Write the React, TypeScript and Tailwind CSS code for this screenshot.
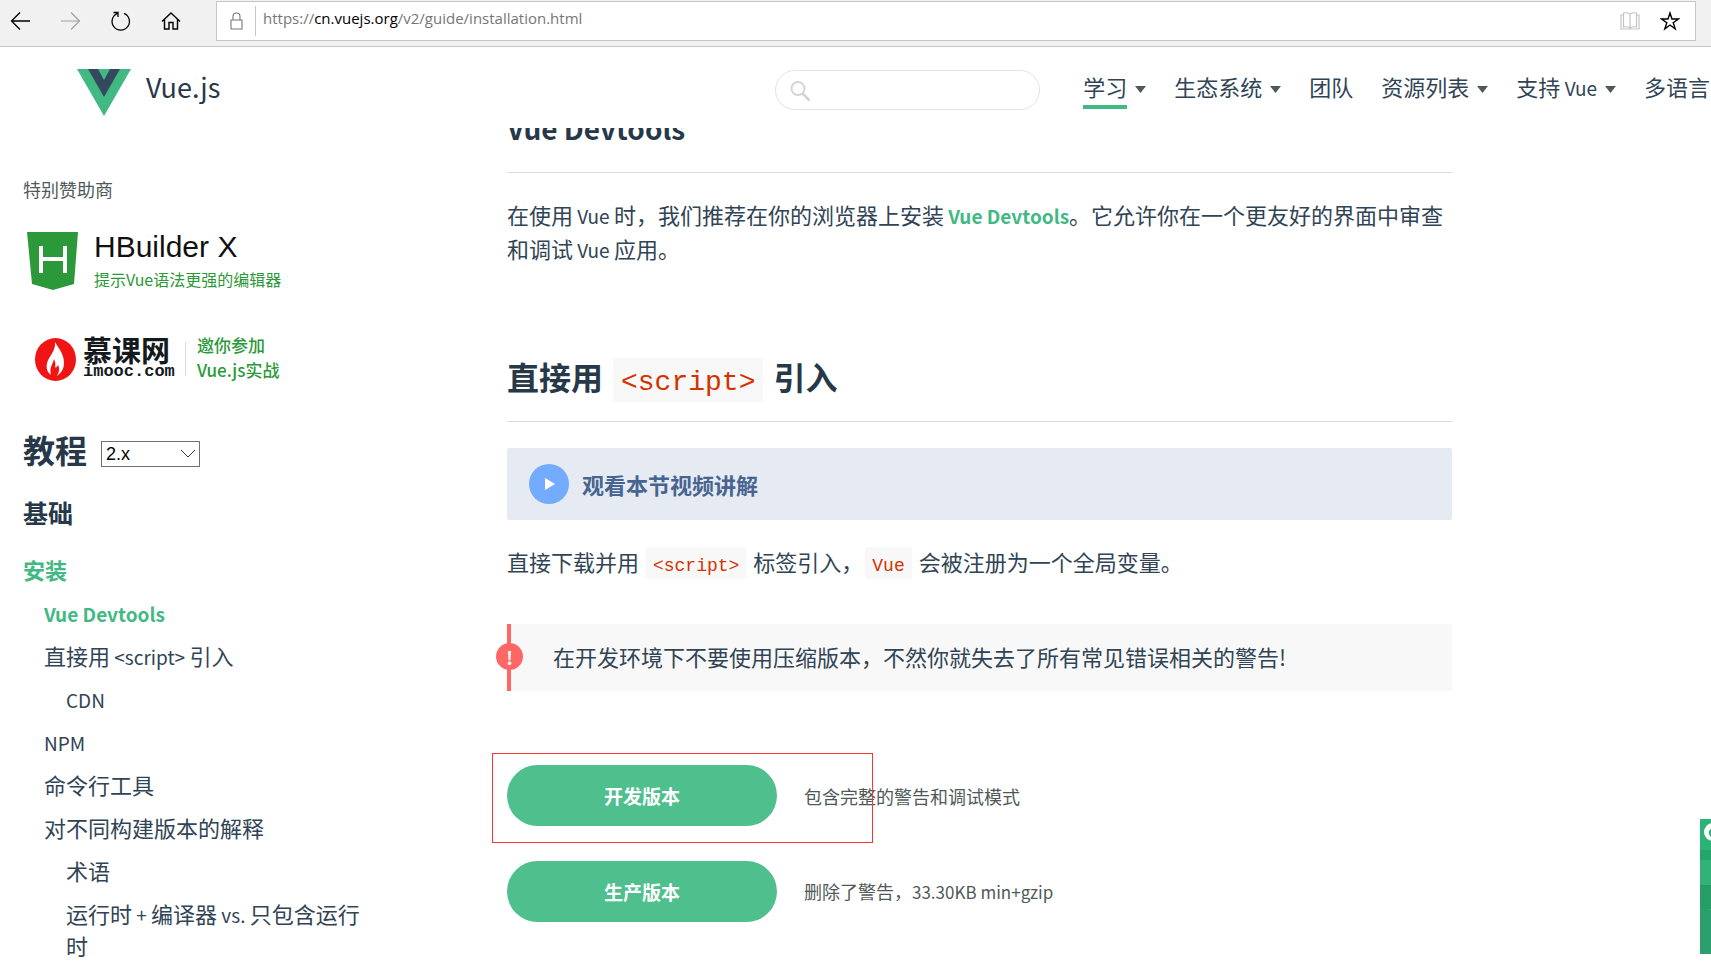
import type { ReactNode } from "react";

const navItems = [
	{ label: "学习", active: true, menu: true },
	{ label: "生态系统", menu: true },
	{ label: "团队" },
	{ label: "资源列表", menu: true },
	{ label: "支持", latin: "Vue", menu: true },
	{ label: "多语言" },
];

function Latin({ children }: { children: ReactNode }) {
	return <span className="text-[19px] leading-none">{children}</span>;
}

function Code({ children }: { children: ReactNode }) {
	return (
		<code className="mx-[2px] rounded-xs bg-[#f8f8f8] px-[7px] pt-[9px] pb-[3px] font-['Liberation_Mono',monospace] text-[18px] leading-none text-[#d63200]">
			{children}
		</code>
	);
}

function BrowserBar() {
	return (
		<div className="flex h-[47px] items-start border-b border-[#c8c8c8] bg-[#f1f1f1] pr-[15px] pl-[10px]">
			<div className="flex h-[42px] w-[206px] items-center gap-[29px]">
				<button aria-label="Back" className="text-black">
					<svg width="21" height="20" viewBox="0 0 21 20" fill="none" stroke="currentColor" strokeWidth="1.3">
						<path d="M20 10H1.5M10 1.5 1.5 10l8.500 8.500" />
					</svg>
				</button>
				<button aria-label="Forward" className="text-[#a0a0a0]">
					<svg width="21" height="20" viewBox="0 0 21 20" fill="none" stroke="currentColor" strokeWidth="1.2">
						<path d="M1 10h18.500M11 1.500 19.500 10 11 18.500" />
					</svg>
				</button>
				<button aria-label="Refresh" className="text-black">
					<svg width="21" height="20" viewBox="0 0 21 20" fill="none" stroke="currentColor" strokeWidth="1.3">
						<path d="M14 2.300A8.700 8.700 0 1 1 7.500 2.300M3.500 1.500H8v4.500" />
					</svg>
				</button>
				<button aria-label="Home" className="text-black">
					<svg width="21" height="20" viewBox="0 0 21 20" fill="none" stroke="currentColor" strokeWidth="1.4">
						<path d="M2 10.500 11 2l9 8.500M4.500 8.500V18H9v-6.500h4V18h4.500V8.500" />
					</svg>
				</button>
			</div>
			<div className="mt-px flex h-10 flex-1 items-center border border-[#c6c6c6] bg-white pl-[13px]">
				<svg width="13" height="18" viewBox="0 0 13 18" fill="none" stroke="#777" strokeWidth="1.1">
					<path d="M1 8h11v9H1zM3 8V4.500a3.500 3.500 0 0 1 7 0V8" />
				</svg>
				<div className="ml-3 h-[30px] w-px bg-[#c6c6c6]" />
				<div className="ml-[7px] pb-[6px] font-['Open_Sans',sans-serif] text-[15px] text-[#767676]">
					https://<span className="text-black">cn.vuejs.org</span>/v2/guide/installation.html
				</div>
				<button aria-label="Reading view" className="ml-auto">
					<svg width="20" height="20" viewBox="0 0 20 20" fill="none" stroke="#c4c4c4" strokeWidth="1.2">
						<path d="M10 3v14M10 3C8 1.500 6 1.500 3.500 2v14c2.500-.5 4.500-.5 6.500 1 2-1.500 4-1.500 6.500-1V2C14 1.500 12 1.500 10 3M3.500 4H1v14h18V4h-2.500" />
					</svg>
				</button>
				<button aria-label="Add to favorites" className="mr-[15px] ml-[20px]">
					<svg width="20" height="20" viewBox="0 0 20 20" fill="none" stroke="#000" strokeWidth="1.400">
						<path d="m10 2 2 6h6.300l-5.100 3.700 2 6.100L10 14l-5.200 3.800 2-6.100L1.700 8H8z" />
					</svg>
				</button>
			</div>
		</div>
	);
}

function Header() {
	return (
		<header className="flex h-[81px] items-center bg-white pl-[77px] text-[#304455]">
			<a href="#" className="flex items-start gap-[15px] pt-[10px]">
				<svg width="54" height="47" viewBox="0 0 54 47">
					<path fill="#42b983" d="M0 0h54L27 47z" />
					<path fill="#35495e" d="M11 0h10l6 11 6-11h10L27 28z" />
				</svg>
				<span className="text-[27px] leading-[36px] text-[#273849]">Vue.js</span>
			</a>
			<div className="relative mt-1 ml-auto">
				<input
					aria-label="Search"
					className="block h-10 w-[265px] rounded-full border border-[#e3e3e3] bg-white pr-4 pl-11 text-base outline-none"
				/>
				<svg className="absolute top-[11px] left-[15px]" width="21" height="21" viewBox="0 0 21 21" fill="none" stroke="#d4d4d4">
					<circle cx="8" cy="7.500" r="6.500" strokeWidth="2" />
					<path d="m12.500 12.500 7 7" strokeWidth="2.500" />
				</svg>
			</div>
			<nav className="mr-px ml-[43px] flex shrink-0 items-center gap-7 text-[22px] leading-[38px]">
				{navItems.map((item) => (
					<a key={item.label} href="#" className="flex items-center gap-2 whitespace-nowrap">
						<span className={item.active ? "border-b-4 border-[#42b983]" : "border-b-4 border-transparent"}>
							{item.label}
							{item.latin && <Latin> {item.latin}</Latin>}
						</span>
						{item.menu && (
							<svg className="mt-1" width="11" height="7" viewBox="0 0 11 7" fill="#4f5959">
								<path d="M0 0h11L5.500 7z" />
							</svg>
						)}
					</a>
				))}
			</nav>
		</header>
	);
}

function Sponsors() {
	return (
		<div>
			<div className="text-[18px] leading-[26px] text-[#4f5959]">特别赞助商</div>
			<a href="#" className="mt-[30px] ml-1 flex gap-4">
				<svg width="51" height="58" viewBox="0 0 51 58">
					<path fill="#2b9939" d="M0 0h51l-4 52-21 6-21-6z" />
					<path fill="none" stroke="#fff" strokeWidth="4" d="M14 14v27M38 14v27M14 27h24" />
				</svg>
				<div>
					<div className="font-['Liberation_Sans',sans-serif] text-[30px] leading-[30px] text-[#111]">HBuilder X</div>
					<div className="mt-[5px] text-[16px] leading-6 text-[#2b9939]">提示Vue语法更强的编辑器</div>
				</div>
			</a>
			<a href="#" className="mt-[41px] ml-3 flex items-center">
				<svg width="41" height="43" viewBox="0 0 41 43">
					<ellipse cx="20.500" cy="21.500" rx="20.500" ry="21.500" fill="#f01414" />
					<path fill="#fff" d="M20 4c4 7 9 12 9 21 0 6-3 10-7 13 2-4 3-7 1-11-1 2-2 3-3 2 1-3 0-5-1-8-1 5-5 8-3 16-4-3-5-7-4-12 2-7 9-12 8-21z" />
				</svg>
				<div className="ml-[7px] w-[92px] text-[#14191e]">
					<div className="text-[29px] leading-[26px] font-bold">慕课网</div>
					<div className="font-['Liberation_Mono',monospace] text-[17px] leading-[20px] font-bold">imooc.com</div>
				</div>
				<div className="ml-[10px] h-[34px] w-px bg-[#ddd]" />
				<div className="ml-[11px] pb-1 text-[17px] leading-[25px] font-medium text-[#2b9939]">
					邀你参加
					<br />
					Vue.js实战
				</div>
			</a>
		</div>
	);
}

function Sidebar() {
	return (
		<aside className="w-[344px] shrink-0 pt-12 text-[#304455]">
			<Sponsors />
			<div className="mt-[39px] flex items-center gap-[14px]">
				<h2 className="text-[32px] leading-[48px] font-bold text-[#273849]">教程</h2>
				<div className="relative mt-[10px]">
					<select
						aria-label="版本"
						className="block h-[26px] w-[99px] appearance-none border border-[#707070] bg-white pl-1 font-['Liberation_Sans',sans-serif] text-[18px] leading-6 text-black"
					>
						<option>2.x</option>
						<option>1.0</option>
					</select>
					<svg className="pointer-events-none absolute top-2 right-1" width="16" height="9" viewBox="0 0 16 9" fill="none" stroke="#333">
						<path d="m1 1 7 7 7-7" />
					</svg>
				</div>
			</div>
			<h3 className="mt-[21px] text-[25px] leading-9 font-bold text-[#273849]">基础</h3>
			<ul className="mt-[23px] space-y-[11px] text-[22px] leading-8">
				<li>
					<a href="#" className="font-bold text-[#42b983]">安装</a>
				</li>
				<li className="pl-[21px]">
					<a href="#" className="font-bold text-[#42b983]"><Latin>Vue Devtools</Latin></a>
				</li>
				<li className="pl-[21px]">
					<a href="#">直接用<Latin> &lt;script&gt; </Latin>引入</a>
				</li>
				<li className="pl-[43px]">
					<a href="#"><Latin>CDN</Latin></a>
				</li>
				<li className="pl-[21px]">
					<a href="#"><Latin>NPM</Latin></a>
				</li>
				<li className="pl-[21px]">
					<a href="#">命令行工具</a>
				</li>
				<li className="pl-[21px]">
					<a href="#">对不同构建版本的解释</a>
				</li>
				<li className="pl-[43px]">
					<a href="#">术语</a>
				</li>
				<li className="pl-[43px]">
					<a href="#">运行时<Latin> + </Latin>编译器<Latin> vs. </Latin>只包含运行时</a>
				</li>
			</ul>
		</aside>
	);
}

function Content() {
	return (
		<main className="ml-[140px] max-w-[945px] flex-1 text-[22px] leading-[34px] text-[#304455]">
			<h3 className="-mt-5 border-b border-[#ddd] pb-6 text-[28px] leading-10 font-bold text-[#273849]">
				Vue Devtools
			</h3>
			<p className="mt-6">
				在使用<Latin> Vue </Latin>时，我们推荐在你的浏览器上安装
				<a href="#" className="font-bold text-[#42b983]"><Latin> Vue Devtools</Latin></a>
				。它允许你在一个更友好的界面中审查和调试<Latin> Vue </Latin>应用。
			</p>
			<h2 className="mt-[87px] border-b border-[#ddd] pb-[21px] text-[32px] leading-[48px] font-bold text-[#273849]">
				直接用
				<code className="mx-[10px] rounded-xs bg-[#f8f8f8] px-2 pt-[9px] pb-1 font-['Liberation_Mono',monospace] text-[28px] leading-none font-normal text-[#d63200]">
					&lt;script&gt;
				</code>
				引入
			</h2>
			<a href="#" className="mt-[26px] flex h-[72px] items-center gap-[13px] rounded-xs bg-[#e6ebf3] px-[22px] font-bold text-[#486491]">
				<svg width="40" height="40" viewBox="0 0 40 40">
					<circle cx="20" cy="20" r="20" fill="#73abff" />
					<path fill="#fff" d="M16 14v12l10-6z" />
				</svg>
				观看本节视频讲解
			</a>
			<p className="mt-6">
				直接下载并用 <Code>&lt;script&gt;</Code> 标签引入，<Code>Vue</Code> 会被注册为一个全局变量。
			</p>
			<p className="relative mt-[46px] border-l-4 border-[#f66] bg-[#f8f8f8] pt-[15px] pb-[18px] pl-[42px]">
				<span className="absolute top-[19px] -left-[15px] flex size-[27px] items-center justify-center rounded-full bg-[#f66] text-[18px] font-bold text-white">
					!
				</span>
				在开发环境下不要使用压缩版本，不然你就失去了所有常见错误相关的警告!
			</p>
			<div className="relative mt-[74px] flex items-center gap-[27px]">
				<a href="#" className="w-[270px] rounded-full bg-[#4fc08d] py-[14px] text-center text-[19px] leading-[33px] font-bold text-white">
					开发版本
				</a>
				<span className="text-[18px] text-[#4f5959]">包含完整的警告和调试模式</span>
				<div className="absolute -top-3 -left-[15px] h-[90px] w-[381px] border border-[#f33]" />
			</div>
			<div className="mt-[35px] flex items-center gap-[27px]">
				<a href="#" className="w-[270px] rounded-full bg-[#4fc08d] py-[14px] text-center text-[19px] leading-[33px] font-bold text-white">
					生产版本
				</a>
				<span className="text-[18px] text-[#4f5959]">
					删除了警告，<span className="text-[17px]">33.30KB min+gzip</span>
				</span>
			</div>
		</main>
	);
}

export default function App() {
	return (
		<div className="relative flex h-screen flex-col overflow-hidden bg-white font-['Noto_Sans_CJK_SC',sans-serif]">
			<BrowserBar />
			<Header />
			<div className="flex min-h-0 flex-1 overflow-hidden pl-[23px]">
				<Sidebar />
				<Content />
			</div>
			{/* promo strip peeking in from the right edge */}
			<svg className="absolute right-0 bottom-[25px]" width="11" height="135" viewBox="0 0 11 135">
				<path fill="#2bb275" d="M0 0h11v135H0z" />
				<path fill="#26a56b" d="M0 31h11v10H0z" />
				<path fill="#34b079" d="M0 41h11v25H0z" />
				<path fill="#269d66" d="M0 66h11v24H0z" />
				<path fill="#2d9f6e" d="M0 89l11 2v44H0z" />
				<circle cx="13" cy="13" r="9" fill="#fff" />
				<path fill="#2bb275" d="M11 10c-3 2-3 5 0 8z" />
			</svg>
		</div>
	);
}
